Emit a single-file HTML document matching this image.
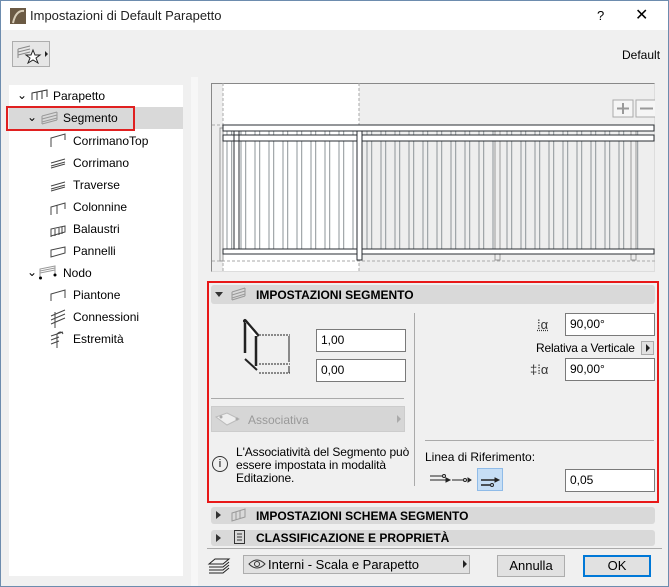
<!DOCTYPE html><html><head><meta charset="utf-8"><style>
*{box-sizing:border-box;margin:0;padding:0}
body{width:669px;height:587px;overflow:hidden;font-family:"Liberation Sans",sans-serif;font-size:12px;color:#000;background:#f0f0f0;position:relative}
.a{position:absolute}
.inp{position:absolute;background:#fff;border:1px solid #7a7a7a;font-size:12px;padding:3px 0 0 4px;height:23px}
.tr{position:absolute;font-size:12px}
.hd{position:absolute;left:211px;width:444px;background:#d9d9d9;border-radius:3px;font-weight:bold;font-size:12px}
</style></head><body>
<div class="a" style="left:0;top:0;width:669px;height:587px;border:1px solid #6d8cae"></div>
<div class="a" style="left:1px;top:1px;width:667px;height:29px;background:#fff"></div>
<svg class="a" style="left:10px;top:8px" width="16" height="16"><rect width="16" height="16" fill="#6b5a44"/><path d="M3 15 Q6 2 14 3" stroke="#d8cdb8" stroke-width="2" fill="none"/></svg>
<div class="a" style="left:30px;top:8px;font-size:13px;color:#222">Impostazioni di Default Parapetto</div>
<div class="a" style="left:597px;top:8px;font-size:13px">?</div>
<div class="a" style="left:635px;top:5px;font-size:16px">✕</div>
<div class="a" style="left:12px;top:41px;width:38px;height:26px;border:1px solid #adadad;background:#e6e6e6"></div>
<svg class="a" style="left:16px;top:44px" width="32" height="20"><path d="M2 5 L14 2 M2 8 L14 5 M2 11 L14 8 M2 5 V14" stroke="#888" fill="none"/><path d="M17 6 L19 11 L24 11 L20 14 L22 19 L17 16 L12 19 L14 14 L10 11 L15 11Z" stroke="#222" fill="#fff"/><path d="M29 7 L32 10 L29 13Z" fill="#222"/></svg>
<div class="a" style="left:622px;top:48px">Default</div>
<div class="a" style="left:9px;top:85px;width:174px;height:491px;background:#fff"></div>
<div class="a" style="left:191px;top:77px;width:7px;height:509px;background:#f7f7f7"></div>
<div class="a" style="left:9px;top:107px;width:174px;height:22px;background:#d9d9d9"></div>
<div class="a" style="left:6px;top:106px;width:129px;height:25px;border:2px solid #e02020"></div>
<div class="tr" style="left:17px;top:88px">⌄</div><div class="tr" style="left:53px;top:89px">Parapetto</div>
<svg class="a" style="left:31px;top:89px" width="18" height="12"><path d="M1 11 V4 L16 1 V8 M1 4 L16 1 M6 11 V3 M11 10 V2" stroke="#333" fill="none"/></svg>
<div class="tr" style="left:27px;top:110px">⌄</div><div class="tr" style="left:63px;top:111px">Segmento</div>
<svg class="a" style="left:41px;top:111px" width="18" height="14"><path d="M1 5 L16 1 M1 8 L16 4 M1 11 L16 7 M1 13 L16 9 M1 5 V13 M16 1 V9" stroke="#999" fill="none"/></svg>
<div class="tr" style="left:73px;top:134px">CorrimanoTop</div>
<div class="tr" style="left:73px;top:156px">Corrimano</div>
<div class="tr" style="left:73px;top:178px">Traverse</div>
<div class="tr" style="left:73px;top:200px">Colonnine</div>
<div class="tr" style="left:73px;top:222px">Balaustri</div>
<div class="tr" style="left:73px;top:244px">Pannelli</div>
<div class="tr" style="left:27px;top:265px">⌄</div><div class="tr" style="left:63px;top:266px">Nodo</div>
<div class="tr" style="left:73px;top:288px">Piantone</div>
<div class="tr" style="left:73px;top:310px">Connessioni</div>
<div class="tr" style="left:73px;top:332px">Estremità</div>
<svg class="a" style="left:49px;top:130px" width="20" height="220" stroke="#444" fill="none">
<path d="M2 17 V8 L16 4 V10"/><path d="M2 33 L16 29 M2 36 L16 32 M2 38 L16 34"/><path d="M2 56 L16 52 M2 59 L16 55 M2 61 L16 57"/><path d="M2 85 V77 L16 73 V79 M8 84 V75"/><path d="M2 107 V99 L16 96 V102 L2 106 M6 106 V99 M10 105 V98 M13 104 V97"/><path d="M2 127 V120 L16 117 V123 Z"/><path d="M2 171 V164 L16 160 V168"/><path d="M2 186 L16 180 M2 190 L16 184 M2 194 L16 188 M6 198 V182"/><path d="M2 206 L14 202 M2 210 L10 207 M2 214 L10 211 M8 218 V204 Q12 200 14 204"/></svg>
<svg class="a" style="left:39px;top:264px" width="20" height="16"><path d="M1 14 V5 L16 2 V11 M1 7 L16 4 M1 9 L16 6" stroke="#999" fill="none"/><circle cx="1.5" cy="14" r="1.5"/><circle cx="16" cy="11" r="1.5"/></svg>
<!-- preview -->
<div class="a" style="left:211px;top:83px;width:444px;height:189px;background:#eee;border:1px solid #ddd;border-top:1px solid #888;border-left:1px solid #888"></div>
<div class="a" style="left:223px;top:84px;width:136px;height:187px;background:#fff"></div>
<svg class="a" style="left:211px;top:83px" width="444" height="189">
<g stroke="#aaa" stroke-dasharray="3,2" fill="none"><path d="M12 0 V189 M148 0 V189 M1 42 H12 M1 178 H444"/></g>
<g id="bal" stroke="#8e9498"></g>
<rect x="9" y="45" width="3" height="133" fill="none" stroke="#999"/>
<rect x="284" y="48" width="5" height="129" fill="#eee" stroke="#999"/>
<rect x="420" y="48" width="5" height="129" fill="#eee" stroke="#999"/>
<rect x="12" y="42" width="431" height="6" fill="#fff" stroke="#2a2e33"/>
<rect x="12" y="52" width="431" height="6" fill="#fff" stroke="#2a2e33"/>
<rect x="12" y="166" width="431" height="5" fill="#fff" stroke="#2a2e33"/>
<rect x="146" y="48" width="5" height="129" fill="#fff" stroke="#2a2e33"/>
<path d="M23 48 V166 M28 48 V166" stroke="#2a2e33"/>
<rect x="402" y="17" width="20" height="17" fill="#f5f5f5" stroke="#aaa"/><path d="M406 25.5 H418 M412 20 V31" stroke="#999" stroke-width="2"/>
<rect x="425" y="17" width="21" height="17" fill="#f5f5f5" stroke="#aaa"/><path d="M429 25.5 H442" stroke="#999" stroke-width="2"/>
</svg>
<script>
var g='';for(var x=16;x<436;x+=14){g+='<path d="M'+x+' 48 V166 M'+(x+4.7)+' 48 V166"/>';}
document.getElementById('bal').innerHTML=g;
</script>
<!-- section -->
<div class="a" style="left:207px;top:281px;width:452px;height:222px;border:2px solid #e81818"></div>
<div class="hd" style="top:285px;height:19px"></div>
<div class="a" style="left:215px;top:292px;border:4px solid transparent;border-top:5px solid #333"></div>
<svg class="a" style="left:231px;top:287px" width="16" height="14"><path d="M1 5 L14 1 M1 8 L14 4 M1 11 L14 7 M1 13 L14 9 M1 5 V13 M14 1 V9" stroke="#999" fill="none"/></svg>
<div class="a" style="left:256px;top:288px;font-weight:bold">IMPOSTAZIONI SEGMENTO</div>
<svg class="a" style="left:243px;top:318px" width="50" height="60" stroke="#222" fill="none"><path d="M2 3 L14 17" stroke-width="4" stroke-linecap="round"/><path d="M2 5 L14 19" stroke="#fff" stroke-width="2"/><path d="M2 5 V35 M13 18 V48" stroke-width="2.5"/><path d="M2 41 L14 52" stroke-width="2"/><path d="M16 17 H47 M16 46 H47 M16 55 H47" stroke-dasharray="2,1" stroke-width="1"/><path d="M46 18 V44 M46 48 V55" /></svg>
<div class="inp" style="left:316px;top:329px;width:90px">1,00</div>
<div class="inp" style="left:316px;top:359px;width:90px">0,00</div>
<div class="a" style="left:211px;top:398px;width:193px;height:1px;background:#aaa"></div>
<div class="a" style="left:211px;top:406px;width:194px;height:26px;background:#d6d6d6;border:1px solid #ccc"></div>
<svg class="a" style="left:215px;top:411px" width="26" height="16"><path d="M1 6 L12 2 L24 8 L12 14Z" fill="#eee" stroke="#bbb"/><circle cx="6" cy="6" r="1.5" fill="#aaa"/><circle cx="22" cy="8" r="1.5" fill="#aaa"/></svg>
<div class="a" style="left:248px;top:413px;color:#999">Associativa</div>
<div class="a" style="left:397px;top:415px;border:4px solid transparent;border-left:4px solid #aaa;border-right:0"></div>
<div class="a" style="left:212px;top:456px;width:16px;height:16px;border:1.3px solid #333;border-radius:50%;text-align:center;font-size:11px;line-height:14px">i</div>
<div class="a" style="left:236px;top:446px;line-height:13px;letter-spacing:-0.1px">L'Associatività del Segmento può<br>essere impostata in modalità<br>Editazione.</div>
<div class="a" style="left:414px;top:313px;width:1px;height:173px;background:#aaa"></div>
<div class="a" style="left:537px;top:317px;font-size:13px;color:#333;text-decoration:underline dotted">⁞α</div>
<div class="inp" style="left:565px;top:313px;width:90px">90,00°</div>
<div class="a" style="left:536px;top:341px;letter-spacing:-0.2px">Relativa a Verticale</div>
<div class="a" style="left:641px;top:341px;width:13px;height:14px;background:#e1e1e1;border:1px solid #aaa"></div>
<div class="a" style="left:646px;top:344px;border:4px solid transparent;border-left:4px solid #222;border-right:0"></div>
<div class="a" style="left:530px;top:362px;font-size:13px;color:#333">‡⁞α</div>
<div class="inp" style="left:565px;top:358px;width:90px">90,00°</div>
<div class="a" style="left:425px;top:440px;width:229px;height:1px;background:#aaa"></div>
<div class="a" style="left:425px;top:450px">Linea di Riferimento:</div>
<div class="a" style="left:477px;top:468px;width:26px;height:23px;background:#c6def5;border:1px solid #8fbbe8"></div>
<svg class="a" style="left:428px;top:470px" width="76" height="20" stroke="#222" fill="none"><path d="M2 6 H14 M2 10 H18"/><circle cx="16" cy="6" r="1.5"/><path d="M18 8 l4 2 -4 2z" fill="#222"/><path d="M24 10 H35"/><circle cx="37" cy="10" r="1.5"/><path d="M40 8 l3 2 -3 2z" fill="#222"/><path d="M53 10 H68 M53 15 H62" stroke-width="1.5"/><circle cx="64" cy="15" r="1.5"/><path d="M67 8 l4 2 -4 2z" fill="#222"/></svg>
<div class="inp" style="left:565px;top:469px;width:90px">0,05</div>
<div class="hd" style="top:507px;height:17px"></div>
<div class="a" style="left:216px;top:511px;border:4px solid transparent;border-left:5px solid #333;border-right:0"></div>
<svg class="a" style="left:231px;top:508px" width="16" height="14"><path d="M1 5 L14 1 V9 L1 13Z M5 4 V12 M9 3 V11" stroke="#999" fill="none"/></svg>
<div class="a" style="left:256px;top:509px;font-weight:bold">IMPOSTAZIONI SCHEMA SEGMENTO</div>
<div class="hd" style="top:530px;height:16px"></div>
<div class="a" style="left:216px;top:534px;border:4px solid transparent;border-left:5px solid #333;border-right:0"></div>
<svg class="a" style="left:234px;top:530px" width="12" height="15"><rect x="0.5" y="0.5" width="10" height="13" fill="none" stroke="#333"/><path d="M3 4 H8 M3 7 H8 M3 10 H8" stroke="#333"/></svg>
<div class="a" style="left:256px;top:531px;font-weight:bold">CLASSIFICAZIONE E PROPRIETÀ</div>
<div class="a" style="left:207px;top:548px;width:455px;height:1px;background:#aaa"></div>
<svg class="a" style="left:207px;top:556px" width="24" height="20" stroke="#222" fill="none"><path d="M2 8 L8 3 H22 L16 8 Z M2 11 L16 11 L22 6 M2 14 H16 L22 9 M2 17 H16 L22 12"/></svg>
<div class="a" style="left:243px;top:555px;width:227px;height:19px;background:#e1e1e1;border:1px solid #adadad"></div>
<svg class="a" style="left:248px;top:558px" width="18" height="12"><path d="M1 6 Q9 -2 17 6 Q9 14 1 6Z" fill="none" stroke="#333"/><circle cx="9" cy="6" r="2.5" fill="none" stroke="#333"/></svg>
<div class="a" style="left:268px;top:557px;font-size:13px">Interni - Scala e Parapetto</div>
<div class="a" style="left:463px;top:560px;border:4px solid transparent;border-left:4px solid #222;border-right:0"></div>
<div class="a" style="left:497px;top:555px;width:68px;height:22px;background:#e1e1e1;border:1px solid #adadad;text-align:center;line-height:20px;font-size:13px">Annulla</div>
<div class="a" style="left:583px;top:555px;width:68px;height:22px;background:#e1e1e1;border:2px solid #0078d7;text-align:center;line-height:18px;font-size:13px">OK</div>
</body></html>
